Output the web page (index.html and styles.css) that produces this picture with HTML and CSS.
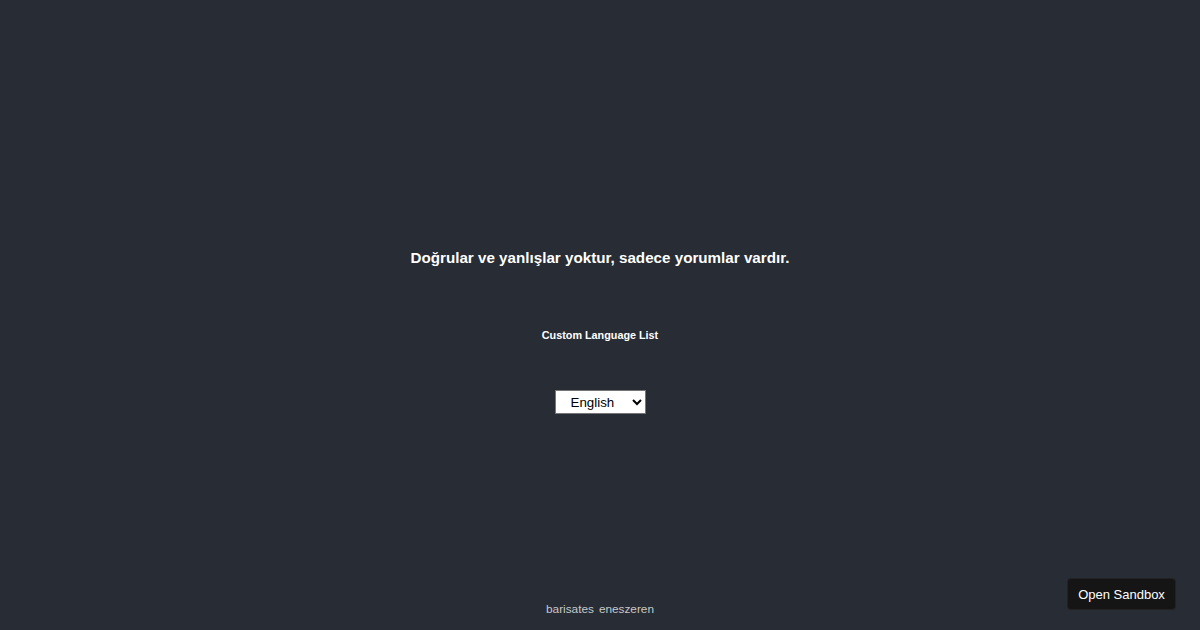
FILE: index.html
```html
<!DOCTYPE html>
<html lang="tr">
<head>
<meta charset="utf-8">
<title>Custom Language List</title>
<link rel="stylesheet" href="styles.css">
</head>
<body>
<div class="app">
  <main class="main">
    <h1 class="quote">Doğrular ve yanlışlar yoktur, sadece yorumlar vardır.</h1>
    <h2 class="label">Custom Language List</h2>
    <select class="lang">
      <option>English</option>
      <option>Türkçe</option>
    </select>
  </main>
  <footer class="footer">
    <a class="author" href="#">barisates</a>
    <a class="author" href="#">eneszeren</a>
  </footer>
</div>
<a class="sandbox" href="#">Open Sandbox</a>
</body>
</html>
```
FILE: styles.css
```css
html, body {
  margin: 0;
  padding: 0;
  background: #282c34;
  font-family: "Liberation Sans", Arial, sans-serif;
  color: #ffffff;
}
.app {
  min-height: 630px;
  display: flex;
  flex-direction: column;
}
.main {
  flex: 1;
  display: flex;
  flex-direction: column;
  align-items: center;
  padding-top: 249px;
}
.quote {
  margin: 0;
  font-size: 15.2px;
  line-height: 18px;
  font-weight: bold;
}
.label {
  margin: 62px 0 0;
  font-size: 10.8px;
  line-height: 13px;
  font-weight: bold;
}
.lang {
  margin-top: 48px;
  width: 91px;
  height: 24px;
  font-family: "Liberation Sans", Arial, sans-serif;
  font-size: 13.33px;
  padding: 0 0 0 11px;
  background: #ffffff;
  color: #000000;
  border: 1px solid #767676;
  border-radius: 0;
}
.footer {
  display: flex;
  justify-content: center;
  gap: 5px;
  padding-bottom: 14px;
  font-size: 11.8px;
  line-height: 14px;
}
.author {
  color: #c8c8c8;
  text-decoration: none;
}
.sandbox {
  position: fixed;
  right: 24px;
  bottom: 20px;
  width: 109px;
  height: 32px;
  box-sizing: border-box;
  display: flex;
  align-items: center;
  justify-content: center;
  background: #151515;
  border: 1px solid #222;
  border-radius: 4px;
  color: #ffffff;
  font-size: 13px;
  text-decoration: none;
}
```
